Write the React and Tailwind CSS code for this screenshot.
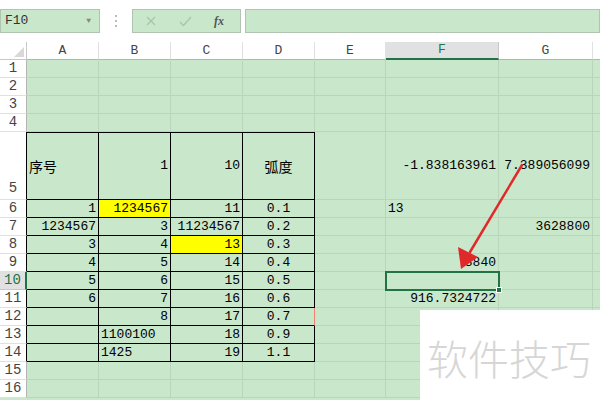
import React from "react";

const COLS = ["A", "B", "C", "D", "E", "F", "G", ""];
const WIDTHS = [72, 72, 72, 72, 71, 113, 94, 8];

// value, align: r | l | c, extra
const DATA = {
  5: { A: ["序号", "l"], B: ["1", "r"], C: ["10", "r"], D: ["弧度", "c"], F: ["-1.838163961", "r"], G: ["7.389056099", "r"] },
  6: { A: ["1", "r"], B: ["1234567", "r", "y"], C: ["11", "r"], D: ["0.1", "c"], F: ["13", "l"] },
  7: { A: ["1234567", "r"], B: ["3", "r"], C: ["11234567", "r"], D: ["0.2", "c"], G: ["3628800", "r"] },
  8: { A: ["3", "r"], B: ["4", "r"], C: ["13", "r", "y"], D: ["0.3", "c"] },
  9: { A: ["4", "r"], B: ["5", "r"], C: ["14", "r"], D: ["0.4", "c"], F: ["3840", "r"] },
  10: { A: ["5", "r"], B: ["6", "r"], C: ["15", "r"], D: ["0.5", "c"] },
  11: { A: ["6", "r"], B: ["7", "r"], C: ["16", "r"], D: ["0.6", "c"], F: ["916.7324722", "r"] },
  12: { B: ["8", "r"], C: ["17", "r"], D: ["0.7", "c"] },
  13: { B: ["1100100", "l"], C: ["18", "r"], D: ["0.9", "c"] },
  14: { B: ["1425", "l"], C: ["19", "r"], D: ["1.1", "c"] },
};

const ROWS = Array.from({ length: 16 }, (_, i) => i + 1);

function Cell({ row, col, ci }) {
  const inTable = row >= 5 && row <= 14 && ci <= 3;
  const cell = DATA[row]?.[col];
  const align = cell?.[1] === "l" ? "justify-start pl-[2px]" : cell?.[1] === "c" ? "justify-center" : "justify-end pr-[2px]";
  const isCJK = cell && /[\u4e00-\u9fff]/.test(cell[0]);
  const selected = row === 10 && col === "F";

  return (
    <div
      className={`relative flex items-center whitespace-nowrap overflow-visible border-r border-b ${align} ${
        inTable ? "border-black" : "border-[#b9d6bb]"
      } ${inTable && row === 5 ? "border-t border-t-black" : ""} ${cell?.[2] === "y" ? "bg-[#ffff00]" : ""} ${
        isCJK ? "font-['Noto_Sans_CJK_SC',sans-serif] text-[14px]" : "text-[13px]"
      } ${row === 12 && col === "D" ? "border-r-[#f08070]" : ""}`}
    >
      {cell && <span className="relative z-0">{cell[0]}</span>}
      {selected && (
        <div className="absolute -left-px -top-px right-[-2px] bottom-[-2px] border-2 border-[#217346] z-10">
          <div className="absolute -right-[4px] -bottom-[4px] w-[6px] h-[6px] bg-[#217346] border border-white" />
        </div>
      )}
    </div>
  );
}

export default function App() {
  return (
    <div className="relative w-[600px] h-[400px] overflow-hidden bg-[#c9e7cb] font-['Liberation_Mono',monospace] text-black">
      {/* formula bar */}
      <div className="h-[42px] flex items-start pt-[9px] bg-white">
        <div className="w-[100px] h-[24px] bg-[#c9e7cb] border border-[#b0c4b1] flex items-center justify-between pl-[4px] pr-[8px] text-[13px] text-[#333]">
          <span>F10</span>
          <span className="text-[8px] text-[#888]">▼</span>
        </div>
        <div className="w-[32px] h-[24px] flex flex-col items-center justify-center gap-[3px]">
          <div className="w-[2px] h-[2px] bg-[#bbb]" />
          <div className="w-[2px] h-[2px] bg-[#bbb]" />
          <div className="w-[2px] h-[2px] bg-[#bbb]" />
        </div>
        <div className="w-[109px] h-[24px] bg-[#c9e7cb] border border-[#b0c4b1] flex items-center pl-[12px] gap-[22px] text-[#a8c5aa]">
          <svg width="12" height="12" viewBox="0 0 12 12" fill="none" stroke="currentColor" strokeWidth="1.3">
            <path d="M2 2l8 8M10 2l-8 8" />
          </svg>
          <svg width="13" height="12" viewBox="0 0 13 12" fill="none" stroke="currentColor" strokeWidth="1.3">
            <path d="M1 7l3.5 3.5L12 2" />
          </svg>
          <span className="font-['Liberation_Serif',serif] italic text-[12px] text-[#555] font-bold">fx</span>
        </div>
        <div className="ml-[4px] flex-1 h-[24px] bg-[#c9e7cb] border border-[#b0c4b1]" />
      </div>

      {/* sheet */}
      <div
        className="grid bg-[#c9e7cb]"
        style={{
          gridTemplateColumns: `27px ${WIDTHS.map((w) => w + "px").join(" ")}`,
          gridTemplateRows: `18px ${ROWS.map((r) => (r === 5 ? "68px" : "18px")).join(" ")}`,
        }}
      >
        <div className="bg-white border-b border-r border-[#c8c8c8] flex items-end justify-end p-[2px]">
          <div className="w-0 h-0 border-l-[10px] border-l-transparent border-b-[10px] border-b-[#d8d8d8]" />
        </div>
        {COLS.map((c) => (
          <div
            key={c}
            className={`flex items-center justify-center text-[13px] border-r ${
              c === "F" ? "bg-[#e1e1e1] text-[#217346] border-b-2 border-b-[#217346] border-r-[#c8c8c8]" : "bg-white text-[#444] border-b border-[#b4b4b4] border-r-[#e0e0e0]"
            }`}
          >
            {c}
          </div>
        ))}
        {ROWS.map((r) => (
          <React.Fragment key={r}>
            <div
              className={`flex justify-center text-[14px] border-b ${r === 5 ? "items-end" : "items-center"} ${
                r === 10
                  ? "bg-[#e1e1e1] text-[#217346] border-r-2 border-r-[#217346] border-b-[#c8c8c8]"
                  : "bg-white text-[#444] border-r border-[#e0e0e0] border-r-[#b4b4b4]"
              } ${r >= 5 && r <= 14 && r !== 10 ? "border-r-black" : ""}`}
            >
              {r}
            </div>
            {COLS.map((c, ci) => (
              <Cell key={c + r} row={r} col={c} ci={ci} />
            ))}
          </React.Fragment>
        ))}
      </div>

      {/* red arrow annotation */}
      <svg className="absolute left-0 top-0 pointer-events-none" width="600" height="400">
        <line x1="522" y1="165" x2="470" y2="252" stroke="#e02a2a" strokeWidth="2.5" strokeLinecap="round" />
        <polygon points="461,269 458,247 478,257" fill="#e02a2a" />
      </svg>

      {/* watermark */}
      <div className="absolute left-[420px] top-[310px] right-0 bottom-0 bg-white flex items-center pl-[7px] pt-[4px]">
        <span className="font-['Noto_Sans_CJK_SC',sans-serif] text-[41px] leading-none text-[#d6d6d6] font-light">
          软件技巧
        </span>
      </div>
    </div>
  );
}
